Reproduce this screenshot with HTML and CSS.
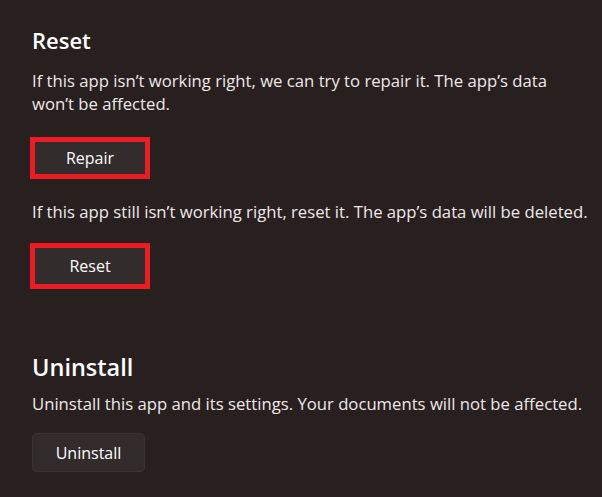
FILE: index.html
```html
<!DOCTYPE html>
<html lang="en">
<head>
  <meta charset="UTF-8">
  <title>App settings - Reset</title>
  <link rel="stylesheet" href="styles.css">
</head>
<body>

  <div id="settings-page">

    <!-- RESET SECTION -->
    <section class="section reset-section">
      <h2>Reset</h2>
      <p class="desc">If this app isn’t working right, we can try to repair it. The app’s data won’t be affected.</p>
      <div class="highlight">
        <button type="button" class="btn">Repair</button>
      </div>
      <p class="desc desc-second">If this app still isn’t working right, reset it. The app’s data will be deleted.</p>
      <div class="highlight">
        <button type="button" class="btn btn-tall">Reset</button>
      </div>
    </section>

    <!-- UNINSTALL SECTION -->
    <section class="section uninstall-section">
      <h2>Uninstall</h2>
      <p class="desc">Uninstall this app and its settings. Your documents will not be affected.</p>
      <button type="button" class="btn btn-uninstall">Uninstall</button>
    </section>

  </div>

</body>
</html>
```

FILE: styles.css
```css
body {
  background-color: #281f1f;
  color: #ffffff;
  font-family: "Open Sans", "Noto Sans", sans-serif;
  margin: 0;
  padding: 0;
}

#settings-page {
  padding: 25px 10px 0 32px;
}

h2 {
  font-size: 22px;
  font-weight: 600;
  line-height: 30px;
  margin: 0;
}

.uninstall-section h2 {
  font-size: 23.5px;
}

.desc {
  font-size: 16.7px;
  line-height: 23px;
  color: #eee9e9;
  margin: 14px 0 22px;
  max-width: 530px;
}

.desc-second {
  max-width: none;
  margin: 21px 0 20px;
}

.highlight {
  display: inline-block;
  border: 5px solid #ed1c24;
  margin-left: -2px;
  vertical-align: top;
}

.btn {
  display: block;
  width: 110px;
  height: 32px;
  padding: 0;
  border: none;
  border-radius: 0;
  background-color: #332c2c;
  color: #ffffff;
  font-family: inherit;
  font-size: 16px;
  cursor: pointer;
}

.btn-tall {
  height: 36px;
}

.uninstall-section {
  margin-top: 63px;
}

.uninstall-section .desc {
  margin: 10px 0 18px;
  max-width: none;
}

.btn-uninstall {
  width: 113px;
  height: 39px;
  border: 1px solid #3a3232;
  border-radius: 4px;
  background-color: #322b2b;
}
```
